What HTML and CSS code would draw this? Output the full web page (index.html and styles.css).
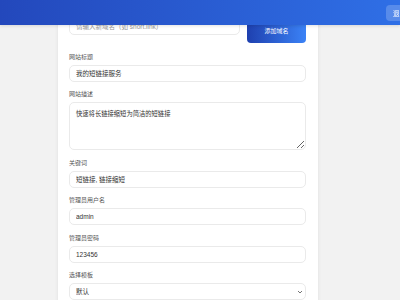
FILE: index.html
```html
<!DOCTYPE html>
<html lang="zh-CN">
<head>
  <meta charset="UTF-8" />
  <meta name="viewport" content="width=device-width, initial-scale=1.0"/>
  <title>系统设置</title>
  <link rel="stylesheet" href="styles.css">
</head>
<body>
  <header class="topbar">
    <button class="logout-btn">退出</button>
  </header>

  <main class="page">
    <section class="settings-card">
      <div class="domain-row">
        <input type="text" class="field" placeholder="请输入新域名（如 short.link）" />
        <button class="add-btn">添加域名</button>
      </div>

      <div class="form-group">
        <label>网站标题</label>
        <input type="text" class="field" value="我的短链接服务" />
      </div>

      <div class="form-group">
        <label>网站描述</label>
        <textarea class="field area">快速将长链接缩短为简洁的短链接</textarea>
      </div>

      <div class="form-group">
        <label>关键词</label>
        <input type="text" class="field" value="短链接, 链接缩短" />
      </div>

      <div class="form-group">
        <label>管理员用户名</label>
        <input type="text" class="field" value="admin" />
      </div>

      <div class="form-group">
        <label>管理员密码</label>
        <input type="text" class="field" value="123456" />
      </div>

      <div class="form-group">
        <label>选择模板</label>
        <div class="select-wrap">
          <select class="field">
            <option>默认</option>
          </select>
          <svg class="chevron" width="6" height="4" viewBox="0 0 6 4"><path d="M1 1l2 2 2-2" fill="none" stroke="#666" stroke-width="0.9"/></svg>
        </div>
      </div>
    </section>
  </main>
</body>
</html>
```

FILE: styles.css
```css
body {
  font-family: "Liberation Sans", "Noto Sans CJK SC", sans-serif;
  margin: 0;
  padding: 0;
  background: #f2f2f2;
  overflow: hidden;
}
.topbar {
  position: fixed;
  top: 0;
  left: 0;
  right: 0;
  height: 25px;
  background: linear-gradient(to right, #2348bc, #2f6fe6);
  box-shadow: 0 1px 3px rgba(0,0,0,0.12);
  display: flex;
  justify-content: flex-end;
  align-items: center;
  z-index: 10;
}
.logout-btn {
  margin-right: -13px;
  height: 16px;
  padding: 0 7px;
  border: none;
  border-radius: 4px;
  background: rgba(255,255,255,0.2);
  color: #fff;
  font-family: inherit;
  font-size: 6.5px;
}
.page {
  padding-top: 7px;
}
.settings-card {
  width: 260px;
  box-sizing: border-box;
  margin-left: 58px;
  background: #fff;
  padding: 11px 12px 11px 11px;
  box-shadow: 0 1px 4px rgba(0,0,0,0.08);
}
.domain-row {
  display: flex;
  align-items: flex-start;
  gap: 7px;
  margin-bottom: 8.5px;
}
.domain-row .field {
  flex: 1;
}
.add-btn {
  width: 59px;
  height: 25px;
  flex-shrink: 0;
  border: none;
  border-radius: 4px;
  background: linear-gradient(to right, #1e40af, #3b82f6);
  color: #fff;
  font-family: inherit;
  font-size: 6px;
}
.form-group {
  margin-bottom: 7.5px;
}
.form-group label {
  display: block;
  font-size: 6px;
  line-height: 10px;
  color: #555;
  margin-bottom: 3px;
}
.field {
  display: block;
  width: 100%;
  box-sizing: border-box;
  height: 17px;
  padding: 0 6px;
  border: 1px solid #eaeaea;
  border-radius: 5px;
  background: #fff;
  font-family: inherit;
  font-size: 6.5px;
  color: #333;
  outline: none;
}
.field::placeholder {
  color: #999;
}
textarea.area {
  height: 48px;
  padding: 6px;
  resize: vertical;
  font-family: "Liberation Sans", "Noto Sans CJK SC", sans-serif;
  font-size: 6.3px;
  line-height: 9px;
}
.select-wrap {
  position: relative;
}
.select-wrap select {
  appearance: none;
  -webkit-appearance: none;
}
.chevron {
  position: absolute;
  right: 3px;
  top: 7px;
}
```
